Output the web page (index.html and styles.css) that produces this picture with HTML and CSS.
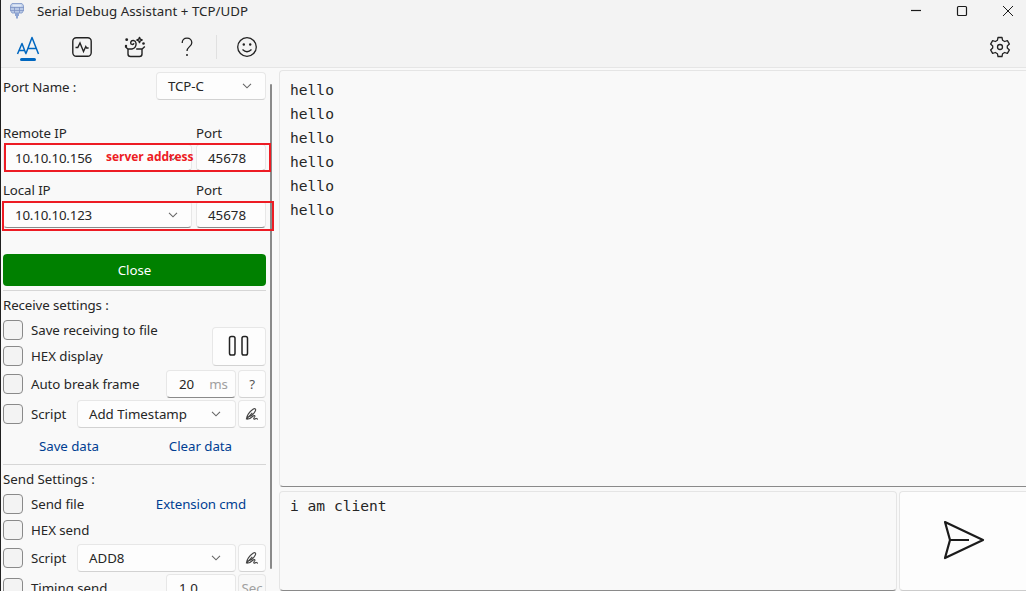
FILE: index.html
```html
<!DOCTYPE html>
<html lang="en">
<head>
<meta charset="utf-8">
<title>Serial Debug Assistant + TCP/UDP</title>
<link rel="stylesheet" href="styles.css">
</head>
<body>
<svg class="defs" aria-hidden="true">
  <symbol id="chevron" viewBox="0 0 10 6"><path d="M1 .8 5 4.800 9 .8" fill="none" stroke="#666" stroke-width="1.100"/></symbol>
  <symbol id="pen" viewBox="0 0 14 14"><path d="M1.300 12.300C1.500 9 4.500 4.500 8 2.200c2-1.200 3.300-.2 2.300 1.800C8.800 7 5.500 9.800 2.200 9.900M1.300 12.300 7.300 5.800M2 12.300c2.500 0 4-1.300 5.500-2.800 1.500-1.400 3-1 2.200.3-.7 1-1.600 2.300-.5 2.400 1 0 1.300-.9 2-.8.6 0 .5.800 1.800.7" fill="none" stroke="#444" stroke-width="1.100"/></symbol>
</svg>
<div class="window">
  <header class="titlebar">
    <svg class="app-icon" width="16" height="17" viewBox="0 0 16 17"><path d="M3 1.500h10l1.500 2v5L13 11H3L1.500 8.500v-5z" fill="#b9c9e6" stroke="#8ea3ce"/><path d="M3.500 2.500h9v2h-9z" fill="#dfe8f6"/><path d="M1 5.500h14M1 8.500h14M5.500 5v6M10.500 5v6" fill="none" stroke="#7e93c4" stroke-width=".8"/><path d="M6 11h4v3H9v2.500H7V14H6z" fill="#8ea5d3"/></svg>
    <span class="title">Serial Debug Assistant + TCP/UDP</span>
    <svg class="win-controls" width="110" height="22" viewBox="0 0 110 22" fill="none" stroke="#1b1b1b"><path d="M4 10.500h10" stroke-width="1.200"/><rect x="50.500" y="6.500" width="9" height="9" rx="1" stroke-width="1.200"/><path d="m96 6 10 10M106 6 96 16"/></svg>
  </header>
  <nav class="toolbar">
    <button class="tool active"><svg width="24" height="20" viewBox="0 0 24 20" fill="none" stroke="#0067c0" stroke-width="1.500" stroke-linejoin="round"><path d="M1.500 18 6 7.500 10 18M3 14.500h5.700M9.800 18 16 1.500 22.500 18M12 12.500h8.300"/></svg></button>
    <button class="tool"><svg width="20" height="20" viewBox="0 0 20 20" fill="none" stroke="#222" stroke-width="1.400"><rect x=".8" y=".8" width="18.400" height="18.400" rx="3.500"/><path d="M3.500 10.500h2.300L8 6l3.500 8.500 2.300-5 .8 1.500h2"/></svg></button>
    <button class="tool"><svg width="22" height="22" viewBox="0 0 22 22" fill="none" stroke="#222" stroke-width="1.400" stroke-linejoin="round"><path d="M4 13v5q0 2.500 2.500 2.500h9Q18 20.500 18 18v-5M1.200 10.500 3.800 13H8c3-.5 4.500-3 4-6C11.500 4 7.500 3.500 6.700 6.300c-.4 2.400 2.600 3 3.300.9M20.800 10.500 18.200 13h-6M15.500 1.400l.8 1.800 1.800.8-1.800.8-.8 1.800-.8-1.800-1.800-.8 1.800-.8z"/><g fill="#222" stroke="none"><circle cx="2.700" cy="3.700" r="1.400"/><circle cx="2" cy="10" r="1.200"/><circle cx="19.500" cy="7.500" r="1.300"/></g></svg></button>
    <button class="tool"><svg width="14" height="20" viewBox="0 0 14 20"><path d="M2.200 6C2.200 2.800 4 1.200 7 1.200s4.800 1.800 4.800 4.500C11.800 9.500 7 9.800 7 14" fill="none" stroke="#222" stroke-width="1.300"/><circle cx="7" cy="18" r="1" fill="#222"/></svg></button>
    <i class="tool-sep"></i>
    <button class="tool smile"><svg width="22" height="22" viewBox="0 0 22 22" fill="none" stroke="#222" stroke-width="1.300"><circle cx="11" cy="11" r="9.300"/><path d="M6.500 13.500q4.500 4.500 9 0"/><circle cx="7.800" cy="8.500" r="1.200" fill="#222" stroke="none"/><circle cx="14.200" cy="8.500" r="1.200" fill="#222" stroke="none"/></svg></button>
    <button class="tool settings"><svg width="22" height="22" viewBox="0 0 22 22" fill="none" stroke="#222" stroke-width="1.300" stroke-linejoin="round"><path d="M9 1.500h4l.6 2.800 2 1.200 2.800-.9 2 3.500L18.300 10v2l2.100 1.900-2 3.500-2.800-.9-2 1.200-.6 2.800H9l-.6-2.800-2-1.200-2.800.9-2-3.500L3.700 12v-2L1.600 8.100l2-3.500 2.800.9 2-1.200z"/><circle cx="11" cy="11" r="2.500"/></svg></button>
  </nav>
  <main class="body">
    <aside class="side">
      <section class="port-row"><span class="lbl">Port Name :</span><div class="field select port-select"><span>TCP-C</span><svg class="chev"><use href="#chevron"/></svg></div></section>
      <section class="net-labels remote-labels"><span>Remote IP</span><span>Port</span></section>
      <section class="net-fields"><div class="field input select"><span>10.10.10.156</span><svg class="chev"><use href="#chevron"/></svg></div><div class="field input">45678</div><div class="mark mark-remote"><b>server address</b></div></section>
      <section class="net-labels local-labels"><span>Local IP</span><span>Port</span></section>
      <section class="net-fields"><div class="field input select"><span>10.10.10.123</span><svg class="chev"><use href="#chevron"/></svg></div><div class="field input">45678</div><div class="mark mark-local"></div></section>
      <button class="close">Close</button>
      <section class="group receive">
        <h2>Receive settings :</h2>
        <div class="receive-top">
          <div class="checks"><label class="check"><i></i><span>Save receiving to file</span></label><label class="check"><i></i><span>HEX display</span></label></div>
          <button class="field pause"><svg width="22" height="22" viewBox="0 0 22 22" fill="none" stroke="#222" stroke-width="1.500"><rect x="1.500" y="1.500" width="5.500" height="18.500" rx="1.800"/><rect x="14" y="1.500" width="5.500" height="18.500" rx="1.800"/></svg></button>
        </div>
        <div class="line"><label class="check"><i></i><span>Auto break frame</span></label><div class="field input num"><span>20</span><em>ms</em></div><button class="field small">?</button></div>
        <div class="line"><label class="check"><i></i><span>Script</span></label><div class="field select script"><span>Add Timestamp</span><svg class="chev"><use href="#chevron"/></svg></div><button class="field small"><svg width="14" height="14"><use href="#pen"/></svg></button></div>
        <div class="links"><a>Save data</a><a>Clear data</a></div>
      </section>
      <section class="group send">
        <h2>Send Settings :</h2>
        <div class="line send-line"><label class="check"><i></i><span>Send file</span></label><a class="ext">Extension cmd</a></div>
        <label class="check"><i></i><span>HEX send</span></label>
        <div class="line"><label class="check"><i></i><span>Script</span></label><div class="field select script"><span>ADD8</span><svg class="chev"><use href="#chevron"/></svg></div><button class="field small"><svg width="14" height="14"><use href="#pen"/></svg></button></div>
        <div class="line"><label class="check"><i></i><span>Timing send</span></label><div class="field input num"><span>1.0</span></div><button class="field small sec">Sec</button></div>
      </section>
      <div class="scroll"></div>
    </aside>
    <section class="work">
      <div class="log">hello
hello
hello
hello
hello
hello</div>
      <div class="composer"><div class="message">i am client</div><button class="submit"><svg width="44" height="42" viewBox="0 0 44 42" fill="none" stroke="#1b1b1b" stroke-width="2.200" stroke-linejoin="round"><path d="m4 2 38 18L4 38l5-18zM9 20h19"/></svg></button></div>
    </section>
  </main>
</div>
</body>
</html>
```
FILE: styles.css
```css
* { box-sizing: border-box; }
body { margin: 0; overflow: hidden; font: 13.3px/20px "Noto Sans", "Open Sans", sans-serif; color: #262626; }
button { font: inherit; color: inherit; letter-spacing: inherit; margin: 0; padding: 0; border: 0; background: none; }
.defs { display: none; }
.window { width: 1026px; height: 591px; overflow: hidden; display: flex; flex-direction: column; background: #f3f3f3; border-left: 1px solid #202020; }
.titlebar { height: 24px; flex: none; display: flex; align-items: flex-start; }
.app-icon { margin: 2px 12px 0 8px; }
.title { line-height: 22px; letter-spacing: .03px; white-space: nowrap; }
.win-controls { margin-left: auto; margin-right: 9px; }
.toolbar { height: 44px; flex: none; display: flex; align-items: center; padding: 2px 11px 0 6px; border-bottom: 1px solid #e5e5e5; }
.tool { width: 42px; height: 34px; margin-right: 11px; display: flex; align-items: center; justify-content: center; }
.tool:nth-child(2), .tool:nth-child(3) { padding-left: 2px; }
.tool.active { position: relative; }
.tool.active svg { margin-bottom: 1px; }
.tool.active::after { content: ""; position: absolute; left: 13px; bottom: 3px; width: 16px; height: 3px; border-radius: 2px; background: #0067c0; }
.tool-sep { width: 1px; height: 24px; margin-left: -3px; background: #e0e0e0; }
.smile { margin-left: 9px; }
.settings { margin-left: auto; margin-right: -6px; }
.body { flex: 1; min-height: 0; display: flex; background: #f9f9f9; }
.side { position: relative; width: 278px; padding: 4px 13px 0 2px; flex: none; overflow: hidden; white-space: nowrap; letter-spacing: -.1px; }
.field { display: flex; align-items: center; height: 28px; border: 1px solid #e7e7e7; border-bottom-color: #d2d2d2; border-radius: 4px; background: #fdfdfd; }
.field.input { border-bottom-color: #8a8a8a; }
.select { justify-content: space-between; padding: 0 13px 0 11px; }
.chev { width: 10px; height: 6px; flex: none; }
.port-row { display: flex; justify-content: space-between; height: 30px; }
.lbl { line-height: 30px; }
.port-select { width: 110px; }
.net-labels { display: grid; grid-template-columns: 193px 1fr; height: 20px; }
.remote-labels { margin-top: 21px; }
.local-labels { margin-top: 9px; }
.net-fields { position: relative; z-index: 1; display: grid; grid-template-columns: 189px 70px; gap: 4px; padding-top: 1px; height: 28px; }
.net-fields .field { height: 27px; }
.net-fields .field:nth-child(2) { padding-left: 11px; letter-spacing: 0; }
.net-fields .select { letter-spacing: -.18px; }
.mark { position: absolute; border: 2px solid #ed1c24; }
.mark-remote { left: 1px; top: 0; width: 267px; height: 29px; }
.mark-remote b { position: absolute; left: 100px; top: 3px; font: bold 12px/18px "Open Sans", sans-serif; letter-spacing: -.03px; color: #ed1c24; }
.mark-local { left: -1px; top: 1px; width: 272px; height: 30px; }
.close { display: block; width: 263px; height: 32px; margin-top: 26px; border-radius: 4px; background: #008000; color: #fff; letter-spacing: 0; }
.group { border-top: 1px solid #d6d6d6; }
.receive { margin-top: 4px; }
h2 { margin: 0; font: inherit; }
.receive h2 { margin-top: 4px; height: 22px; }
.receive-top { display: flex; justify-content: space-between; height: 52px; }
.check { display: flex; align-items: center; gap: 8px; height: 26px; letter-spacing: -.05px; }
.check i { width: 20px; height: 20px; border: 1px solid #8a8a8a; border-radius: 4px; background: #f3f3f3; }
.pause { width: 54px; height: 39px; margin-top: 10px; justify-content: center; flex: none; }
.pause svg { margin-bottom: 1px; }
.line { display: flex; align-items: center; height: 30px; }
.line .field { margin-left: auto; }
.line .small { width: 28px; margin-left: 2px; justify-content: center; color: #555; }
.line .num { width: 70px; padding: 0 7px 0 12px; justify-content: space-between; letter-spacing: 0; }
em { font-style: normal; color: #a0a0a0; }
.script { width: 159px; }
.line .script { padding-right: 14px; letter-spacing: -.03px; }
.links { display: flex; height: 35px; padding: 7px 34px 0 36px; justify-content: space-between; }
.links a { letter-spacing: -.05px; }
a { color: #003e92; }
.send h2 { margin-top: 4px; height: 22px; letter-spacing: -.03px; }
.send-line { height: 26px; }
.ext { margin-left: auto; margin-right: 20px; }
.line .sec { color: #a0a0a0; background: #f8f8f8; }
.scroll { position: absolute; left: 269px; top: 16px; width: 2px; height: 485px; background: #8a8a8a; border-radius: 1px; }
.work { flex: 1; min-width: 0; display: flex; flex-direction: column; padding-top: 2px; font: 14.6px/24px "DejaVu Sans Mono", monospace; }
.log { height: 417px; white-space: pre; padding: 7px 10px; border: 1px solid #e5e5e5; border-bottom-color: #8a8a8a; border-right: 0; border-radius: 4px 0 0 4px; }
.composer { flex: 1; display: flex; gap: 2px; margin-top: 4px; }
.message { width: 618px; padding: 2px 10px; border: 1px solid #e5e5e5; border-bottom-color: #8a8a8a; border-radius: 4px; }
.submit { flex: 1; display: flex; align-items: center; justify-content: center; border: 1px solid #e5e5e5; border-right: 0; border-bottom-color: #ccc; border-radius: 4px 0 0 4px; background: #fdfdfd; }
```
